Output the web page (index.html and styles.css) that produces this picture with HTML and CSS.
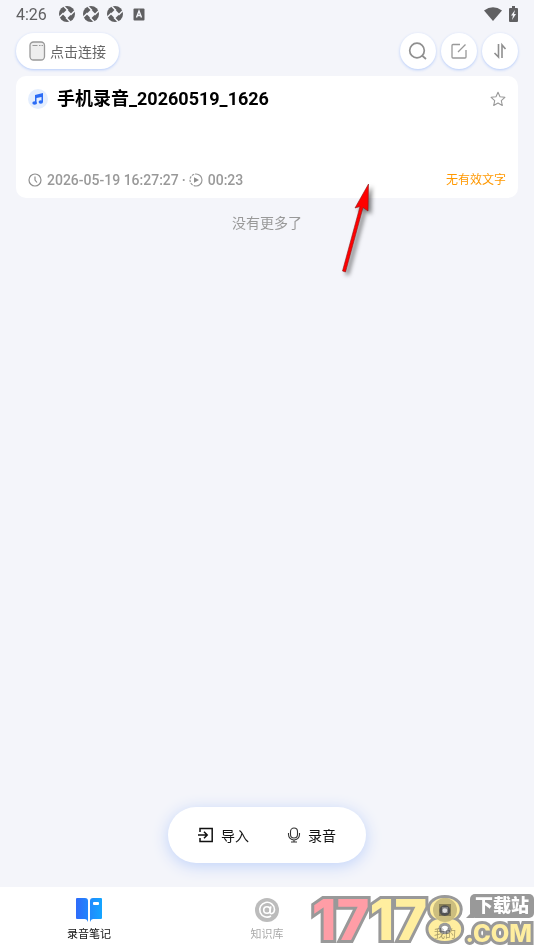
FILE: index.html
```html
<!DOCTYPE html>
<html lang="zh-cn">
<head>
    <meta charset="utf-8">
    <meta name="viewport" content="width=device-width, initial-scale=1">
    <title>录音笔记</title>
    <link rel="stylesheet" href="styles.css">
</head>
<body>
<svg class="defs" aria-hidden="true">
    <symbol id="shutter" viewBox="0 0 16 16">
        <circle cx="8" cy="8" r="8" fill="#606062"/>
        <path d="M8 3.500 12.500 8 8 12.500 3.500 8z" fill="#f4f5fa"/>
        <path d="M4.500 0 9 4.500M16 4.500 11.500 9M11.500 16 7 11.500M0 11.500 4.500 7" stroke="#f4f5fa" stroke-width="1.500"/>
    </symbol>
</svg>
<div class="page">
    <!-- 状态栏 -->
    <div class="status">
        <span class="time">4:26</span>
        <svg class="app" width="16" height="16"><use href="#shutter"/></svg>
        <svg class="app" width="16" height="16"><use href="#shutter"/></svg>
        <svg class="app" width="16" height="16"><use href="#shutter"/></svg>
        <svg class="app" width="16" height="14" viewBox="0 0 16 14">
            <rect x="2.500" y="1.500" width="11" height="12" rx="1" fill="#606062"/>
            <path d="M5.500 10.500 8 4l2.500 6.500M6.500 8.500h3" fill="none" stroke="#f4f5fa" stroke-width="1.400"/>
        </svg>
        <span class="right">
            <svg width="18" height="14" viewBox="0 0 18 14"><path d="M0 3.500Q9-3 18 3.500L9 14z" fill="#606062"/></svg>
            <svg width="9" height="16" viewBox="0 0 9 16">
                <path d="M3 0h3v2h2q1 0 1 1v12q0 1-1 1H1q-1 0-1-1V3q0-1 1-1h2z" fill="#606062"/>
                <path d="M6 4 2 9.500h2L3 14l4-6H5z" fill="#f4f5fa"/>
            </svg>
        </span>
    </div>

    <!-- 工具栏 -->
    <header class="toolbar">
        <button class="connect" type="button">
            <svg width="17" height="20" viewBox="0 0 17 20">
                <rect x="1" y="1" width="14.500" height="18" rx="3.500" fill="#eee" stroke="#999" stroke-width="1.300"/>
                <path d="M3.500 4.500h5M10 4.500h1.500M12.500 4.500H14" stroke="#999" stroke-width="1.200"/>
            </svg>
            点击连接
        </button>
        <div class="tools">
            <button type="button" aria-label="搜索">
                <svg width="20" height="20" viewBox="0 0 20 20" fill="none" stroke="#8f8f8f" stroke-width="1.700">
                    <circle cx="9" cy="9.500" r="7.300"/><path d="m14 14.500 4 3.500"/>
                </svg>
            </button>
            <button type="button" aria-label="编辑">
                <svg width="18" height="18" viewBox="0 0 18 18" fill="none" stroke="#999" stroke-width="1.300">
                    <path d="M10 2.500H3q-1 0-1 1v11.500q0 1 1 1h12q1 0 1-1V8M8 10 15.500 2.500"/>
                </svg>
            </button>
            <button type="button" aria-label="排序">
                <svg width="18" height="18" viewBox="0 0 18 18" fill="none" stroke="#8f8f8f" stroke-width="1.600">
                    <path d="M7.500 2v13L3.500 11M11 16V3l3.500 4"/>
                </svg>
            </button>
        </div>
    </header>

    <!-- 录音列表 -->
    <main class="list">
        <article class="card">
            <div class="head">
                <span class="music">
                    <svg width="12" height="12" viewBox="0 0 12 12" fill="#2b6cf6">
                        <path d="M3 2 11 0v9H9.500V4L4.500 5v6H3z"/>
                        <ellipse cx="2.600" cy="10" rx="2.300" ry="1.800"/><ellipse cx="8.800" cy="9" rx="2.200" ry="1.800"/>
                    </svg>
                </span>
                <h1>手机录音_20260519_1626</h1>
                <button class="star" type="button" aria-label="收藏">
                    <svg width="16" height="16" viewBox="0 0 16 16" fill="none" stroke="#999" stroke-width="1.100" stroke-linejoin="round">
                        <path d="m8 1.300 2 4.500 4.900.5-3.600 3.300 1 4.900L8 12l-4.300 2.500 1-4.900L1.100 6.300 6 5.800z"/>
                    </svg>
                </button>
            </div>
            <div class="meta">
                <svg width="14" height="14" viewBox="0 0 14 14" fill="none" stroke="#8f8f8f" stroke-width="1.200">
                    <circle cx="7" cy="7" r="6"/><path d="M7 3.500V7l2 2.500"/>
                </svg>
                <span class="date">2026-05-19 16:27:27</span>
                <span class="dot">·</span>
                <svg width="14" height="14" viewBox="0 0 14 14">
                    <path d="M7 1a6 6 0 0 1 0 12" fill="none" stroke="#999" stroke-width="1.200"/>
                    <path d="M7 13A6 6 0 0 1 7 1" fill="none" stroke="#999" stroke-width="1.200" stroke-dasharray="2.500 1"/>
                    <path d="M5 4.200 10 7 5 9.800z" fill="#8f8f8f"/>
                </svg>
                <span class="date">00:23</span>
                <span class="state">无有效文字</span>
            </div>
        </article>
        <p class="more">没有更多了</p>
        <svg class="arrow" width="50" height="100" viewBox="0 0 50 100">
            <path d="M35.500 5 35 32 30 28.500 12.500 93 9.500 92 27 27.500 22 29z" fill="#f00" stroke="#8d1515" stroke-width=".6"/>
        </svg>
    </main>

    <div class="actions">
        <button type="button">
            <svg width="16" height="16" viewBox="0 0 16 16" fill="none" stroke="#111" stroke-width="1.500">
                <path d="M2 5V1.500h12.200v13H2V11M0 8h9M6 4.800 9.200 8 6 11.200"/>
            </svg>
            导入
        </button>
        <button type="button">
            <svg width="14" height="16" viewBox="0 0 14 16" fill="none" stroke="#333" stroke-width="1.100">
                <rect x="3.500" y="1" width="7" height="10" rx="3.500"/>
                <path d="M1.500 6v1.500a5.500 5.500 0 0 0 11 0V6M7 13v2M4 15h6"/>
            </svg>
            录音
        </button>
    </div>

    <!-- 底部导航 -->
    <nav class="tabs">
        <a class="active" href="#note">
            <svg width="28" height="24" viewBox="0 0 28 24">
                <defs>
                    <linearGradient id="blue"><stop stop-color="#2f6bfa"/><stop offset="1" stop-color="#14a5ff"/></linearGradient>
                </defs>
                <path d="M2 0h8q3 0 3 3v21q-1-3-3-3H2q-1 0-1-1V1q0-1 1-1zM18 0h8q1 0 1 1v19q0 1-1 1h-8q-2 0-3 3V3q0-3 3-3z" fill="url(#blue)"/>
                <rect x="18" y="4" width="6" height="3" rx="1" fill="#fff"/>
            </svg>
            录音笔记
        </a>
        <a href="#base">
            <svg width="24" height="24" viewBox="0 0 24 24">
                <circle cx="12" cy="12" r="12" fill="#bcbcbc"/>
                <g fill="none" stroke="#fff" stroke-width="1.600">
                    <circle cx="12" cy="12" r="3.300"/>
                    <path d="M15.800 8.300 15 13.500q-.2 2.500 2 2 2.500-1 2.500-4A7.400 7.400 0 1 0 16 18"/>
                </g>
            </svg>
            知识库
        </a>
        <a href="#mine">
            <svg width="24" height="24" viewBox="0 0 24 24">
                <circle cx="12" cy="12" r="12" fill="#ccc"/>
                <rect x="7.500" y="7.500" width="9" height="9" fill="#ddd" stroke="#888" stroke-width="3"/>
            </svg>
            我的
        </a>
    </nav>

    <div class="mark">
        <span class="num"><b>17</b>178</span>
        <span class="site">
            <span class="tip">下载站</span>
            <span class="com">.COM</span>
        </span>
    </div>
</div>
</body>
</html>
```

FILE: styles.css
```css
* {
    box-sizing: border-box;
}

body {
    margin: 0;
    font-family: Roboto, "Noto Sans CJK SC", sans-serif;
    background-color: #f4f5fa;
}

button {
    margin: 0;
    padding: 0;
    border: none;
    font: inherit;
    color: inherit;
    background: none;
    cursor: pointer;
}

svg {
    display: block;
    flex: none;
}

.defs {
    position: absolute;
    width: 0;
    height: 0;
}

.page {
    position: relative;
    display: flex;
    flex-direction: column;
    min-height: 100vh;
    overflow: hidden;
}

/*状态栏*/
.status {
    display: flex;
    align-items: center;
    gap: 8px;
    height: 28px;
    padding: 0 16px;
    color: #606062;
}

.time {
    margin-right: 4px;
    font-size: 16px;
}

.right {
    display: flex;
    align-items: center;
    gap: 7px;
    margin-left: auto;
}

/*工具栏*/
.toolbar {
    display: flex;
    justify-content: space-between;
    padding: 5px 16px 7px;
}

.connect,
.tools button {
    height: 36px;
    border-radius: 18px;
    background-color: #fff;
    box-shadow: 0 1px 3px #b5cbfa;
}

.connect {
    display: flex;
    align-items: center;
    gap: 4px;
    padding: 0 13px;
    font-size: 14px;
    color: #666;
}

.tools {
    display: flex;
    gap: 5px;
}

.tools button {
    display: flex;
    align-items: center;
    justify-content: center;
    width: 36px;
}

/*录音列表*/
.list {
    position: relative;
    padding: 0 16px;
}

.card {
    display: flex;
    flex-direction: column;
    justify-content: space-between;
    min-height: 122px;
    padding: 10px 12px;
    border-radius: 10px;
    background-color: #fff;
}

.head {
    display: flex;
    align-items: center;
}

.music {
    display: flex;
    align-items: center;
    justify-content: center;
    width: 20px;
    height: 20px;
    border-radius: 50%;
    background-color: #e4eefe;
}

h1 {
    flex: 1;
    margin: 0 0 0 9px;
    font-size: 18px;
    line-height: 26px;
    font-weight: 700;
    color: #000;
}

.meta {
    display: flex;
    align-items: center;
    gap: 5px;
    font-size: 14px;
    line-height: 16px;
    font-weight: 500;
    color: #999;
}

.dot {
    margin: 0 -2px;
}

.state {
    margin-left: auto;
    font-size: 12px;
    font-weight: 400;
    color: #ff9800;
}

.more {
    margin: 14px 0 0;
    font-size: 14px;
    line-height: 22px;
    text-align: center;
    color: #999;
}

.arrow {
    position: absolute;
    left: 333px;
    top: 103px;
    filter: drop-shadow(3px 3px 2px rgba(0, 0, 0, .5));
}

/*导入、录音*/
.actions {
    display: flex;
    align-items: center;
    justify-content: center;
    gap: 38px;
    height: 56px;
    margin: auto auto 24px;
    padding: 0 30px;
    border-radius: 28px;
    background-color: #fff;
    box-shadow: 0 3px 16px #bfd2fa;
}

.actions button {
    display: flex;
    align-items: center;
    gap: 7px;
    font-size: 14px;
    color: #111;
}

/*底部导航*/
.tabs {
    display: flex;
    height: 63px;
    padding-top: 11px;
    background-color: #fff;
}

.tabs a {
    display: flex;
    flex: 1;
    flex-direction: column;
    align-items: center;
    gap: 5px;
    font-size: 11px;
    line-height: 16px;
    text-decoration: none;
    color: #aaa;
}

.tabs .active {
    color: #111;
}

/*右下角标识*/
.mark {
    position: absolute;
    right: 0;
    bottom: 0;
    display: flex;
    align-items: flex-end;
    height: 60px;
    font-family: Inter, "Noto Sans CJK SC", sans-serif;
    font-weight: 800;
    color: #ffee9f;
    mix-blend-mode: multiply;
    pointer-events: none;
}

.num,
.com {
    -webkit-text-stroke: 6px #999;
    paint-order: stroke fill;
}

.num {
    font-size: 56px;
    line-height: 60px;
}

.num b {
    font-weight: 800;
    color: #ff9da6;
}

.site {
    display: flex;
    flex-direction: column;
    align-items: flex-end;
}

.tip {
    position: relative;
    padding: 0 5px;
    border-radius: 5px;
    font-size: 18px;
    line-height: 24px;
    color: #fff;
    background-color: #999;
}

/*气泡尖角*/
.tip::before {
    content: "";
    position: absolute;
    left: -4px;
    bottom: 0;
    border-bottom: 8px solid #999;
    border-left: 8px solid transparent;
}

.com {
    padding: 0 2px;
    font-size: 24px;
    line-height: 32px;
}
```
